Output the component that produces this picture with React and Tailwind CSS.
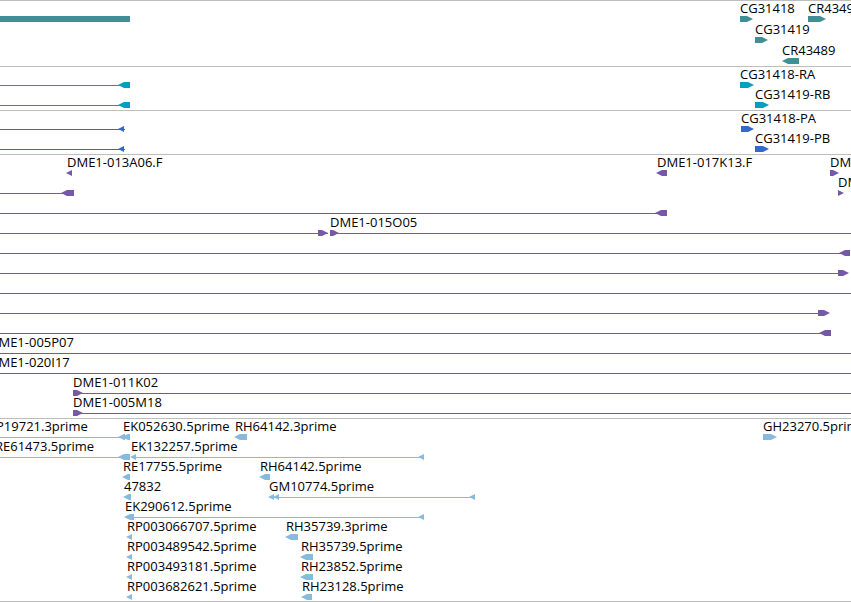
import React from 'react';

// Shapes are [dir, start, end], lines are [start, end], all in pixels.
// A line without an end runs on to the edge of the window.
const tracks = [
  {
    name: 'genes',
    color: '#3f8f96',
    spacing: 'gap-px',
    rows: [
      {
        labels: [[740, 'CG31418'], [808, 'CR43490']],
        shapes: [['box', 0, 130], ['right', 740, 753], ['right', 808, 826]],
      },
      { labels: [[755, 'CG31419']], shapes: [['right', 755, 768]] },
      { labels: [[782, 'CR43489']], shapes: [['left', 782, 799]] },
    ],
  },
  {
    name: 'transcripts',
    color: '#009fc0',
    rows: [
      {
        labels: [[740, 'CG31418-RA']],
        lines: [[0, 120]],
        shapes: [['left', 118, 130], ['right', 740, 754]],
      },
      {
        labels: [[755, 'CG31419-RB']],
        lines: [[0, 120]],
        shapes: [['left', 118, 130], ['right', 755, 769]],
      },
    ],
  },
  {
    name: 'proteins',
    color: '#3369cc',
    rows: [
      {
        labels: [[741, 'CG31418-PA']],
        lines: [[0, 125]],
        shapes: [['left', 118, 124], ['right', 741, 754]],
      },
      {
        labels: [[755, 'CG31419-PB']],
        lines: [[0, 125]],
        shapes: [['left', 118, 124], ['right', 755, 769]],
      },
    ],
  },
  {
    name: 'clones',
    color: '#7558a8',
    rows: [
      {
        labels: [[67, 'DME1-013A06.F'], [657, 'DME1-017K13.F'], [830, 'DME1-021B04']],
        shapes: [['left', 66, 72], ['left', 656, 667], ['right', 830, 839]],
      },
      {
        labels: [[838, 'DME1-002C11']],
        lines: [[0, 63]],
        shapes: [['left', 61, 74], ['right', 838, 844]],
      },
      { lines: [[0, 658]], shapes: [['left', 655, 667]] },
      {
        labels: [[330, 'DME1-015O05']],
        lines: [[0, 328], [330]],
        shapes: [['right', 318, 328], ['right', 330, 339]],
      },
      { lines: [[0, 842]], shapes: [['left', 839, 850]] },
      { lines: [[0, 840]], shapes: [['right', 838, 849]] },
      { lines: [[0]] },
      { lines: [[0, 820]], shapes: [['right', 818, 830]] },
      { lines: [[0, 822]], shapes: [['left', 819, 831]] },
      { labels: [[-11, 'DME1-005P07']], lines: [[0]] },
      { labels: [[-11, 'DME1-020I17']], lines: [[0]] },
      { labels: [[73, 'DME1-011K02']], lines: [[75]], shapes: [['right', 73, 83]] },
      { labels: [[73, 'DME1-005M18']], lines: [[75]], shapes: [['right', 73, 83]] },
    ],
  },
  {
    name: 'ests',
    color: '#87bbdc',
    rows: [
      {
        labels: [
          [-12, 'RP19721.3prime'],
          [123, 'EK052630.5prime'],
          [235, 'RH64142.3prime'],
          [763, 'GH23270.5prime'],
        ],
        lines: [[0, 125]],
        shapes: [['left', 118, 125], ['left', 122, 130], ['left', 234, 247], ['right', 763, 777]],
      },
      {
        labels: [[-5, 'RE61473.5prime'], [131, 'EK132257.5prime']],
        lines: [[0, 120], [132, 420]],
        shapes: [['left', 118, 130], ['left', 130, 136], ['left', 418, 424]],
      },
      {
        labels: [[123, 'RE17755.5prime'], [260, 'RH64142.5prime']],
        shapes: [['left', 122, 130], ['left', 259, 270]],
      },
      {
        labels: [[124, '47832'], [269, 'GM10774.5prime']],
        lines: [[272, 472]],
        shapes: [['left', 123, 131], ['left', 268, 274], ['left', 273, 279], ['left', 469, 475]],
      },
      {
        labels: [[125, 'EK290612.5prime']],
        lines: [[128, 420]],
        shapes: [['left', 124, 134], ['left', 418, 424]],
      },
      {
        labels: [[127, 'RP003066707.5prime'], [286, 'RH35739.3prime']],
        shapes: [['left', 126, 132], ['left', 285, 298]],
      },
      {
        labels: [[127, 'RP003489542.5prime'], [301, 'RH35739.5prime']],
        shapes: [['left', 126, 132], ['left', 300, 313]],
      },
      {
        labels: [[127, 'RP003493181.5prime'], [301, 'RH23852.5prime']],
        shapes: [['left', 126, 132], ['left', 300, 313]],
      },
      {
        labels: [[127, 'RP003682621.5prime'], [302, 'RH23128.5prime']],
        shapes: [['left', 126, 132], ['left', 301, 312]],
      },
    ],
  },
];

const shapePoints = (dir, start, end) => {
  if (dir === 'box') return `${start},0 ${end},0 ${end},6 ${start},6`;
  const tip = Math.min(6, end - start);
  if (dir === 'left') {
    return `${start},3 ${start + tip},0 ${end},0 ${end},6 ${start + tip},6`;
  }
  return `${end},3 ${end - tip},0 ${start},0 ${start},6 ${end - tip},6`;
};

const Row = ({ row, color }) => {
  const { labels = [], lines = [], shapes = [] } = row;

  return (
    <div className="flex h-5 flex-col">
      {/* Feature names */}
      <div className="relative h-3.5">
        {labels.map(([x, text]) => (
          <span key={text} className="absolute top-0 whitespace-nowrap" style={{ left: x }}>
            {text}
          </span>
        ))}
      </div>

      {/* Feature glyphs */}
      <svg className="block h-1.5 w-full" fill={color} aria-hidden="true">
        {lines.map(([start, end]) => (
          <rect key={start} x={start} y="3" width={end === undefined ? '100%' : end - start} height="1" />
        ))}
        {shapes.map(([dir, start, end]) => (
          <polygon key={start} points={shapePoints(dir, start, end)} />
        ))}
      </svg>
    </div>
  );
};

const Track = ({ track }) => (
  <section
    aria-label={track.name}
    className={`flex flex-col border-t border-[#bebebe] pt-px pb-0.5 last:border-b last:pb-px ${track.spacing || ''}`}
  >
    {track.rows.map((row, i) => (
      <Row key={i} row={row} color={track.color} />
    ))}
  </section>
);

export default function App() {
  return (
    <main className="w-full overflow-hidden bg-white font-['Open_Sans',sans-serif] text-[13px] leading-[12px] text-black">
      {tracks.map((track) => (
        <Track key={track.name} track={track} />
      ))}
    </main>
  );
}
